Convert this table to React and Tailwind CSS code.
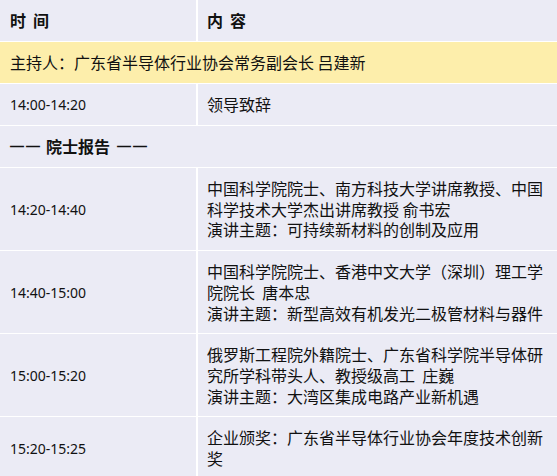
export default function App() {
  const cjk = { fontFamily: '"Noto Sans CJK SC", "Noto Sans", sans-serif' };
  const rows = [
    { t: "14:20-14:40", c: ["中国科学院院士、南方科技大学讲席教授、中国科学技术大学杰出讲席教授 俞书宏", "演讲主题：可持续新材料的创制及应用"] },
    { t: "14:40-15:00", c: ["中国科学院院士、香港中文大学（深圳）理工学院院长  唐本忠", "演讲主题：新型高效有机发光二极管材料与器件"] },
    { t: "15:00-15:20", c: ["俄罗斯工程院外籍院士、广东省科学院半导体研究所学科带头人、教授级高工  庄巍", "演讲主题：大湾区集成电路产业新机遇"] },
    { t: "15:20-15:25", c: ["企业颁奖：广东省半导体行业协会年度技术创新奖"] },
  ];
  return (
    <div className="w-[557px] h-[476px] overflow-hidden bg-[#ebebf5] text-[#111] text-[16px] leading-[21px]" style={cjk}>
      <div className="flex border-b border-white">
        <div className="w-[198px] shrink-0 border-r-2 border-white px-[10px] py-[10px] font-bold">
          时<span className="ml-[7px]">间</span>
        </div>
        <div className="flex-1 px-[9px] py-[10px] font-bold">
          内<span className="ml-[7px]">容</span>
        </div>
      </div>
      <div className="bg-[#fdeeab] border-b border-white px-[10px] py-[10px] whitespace-pre">主持人：广东省半导体行业协会常务副会长 吕建新</div>
      <div className="flex border-b border-white">
        <div className="w-[198px] shrink-0 border-r-2 border-white px-[10px] py-[10px] flex items-center text-[14px] font-['Noto_Sans',sans-serif]">14:00-14:20</div>
        <div className="flex-1 px-[9px] py-[10px]">领导致辞</div>
      </div>
      <div className="border-b border-white px-[10px] py-[10px] font-bold flex items-center">
        <span className="font-['Liberation_Sans',sans-serif] text-[14px] tracking-[2px] mr-[4px] font-black">——</span>
        <span>院士报告</span>
        <span className="font-['Liberation_Sans',sans-serif] text-[14px] tracking-[2px] ml-[7px] font-black">——</span>
      </div>
      {rows.map((r) => (
        <div key={r.t} className="flex border-b border-white">
          <div className="w-[198px] shrink-0 border-r-2 border-white px-[10px] py-[10px] flex items-center text-[14px] font-['Noto_Sans',sans-serif]">{r.t}</div>
          <div className="flex-1 pl-[9px] pr-[10px] py-[10px] leading-[20.7px] whitespace-pre-wrap">
            {r.c.map((l, i) => (
              <div key={i}>{l}</div>
            ))}
          </div>
        </div>
      ))}
    </div>
  );
}
